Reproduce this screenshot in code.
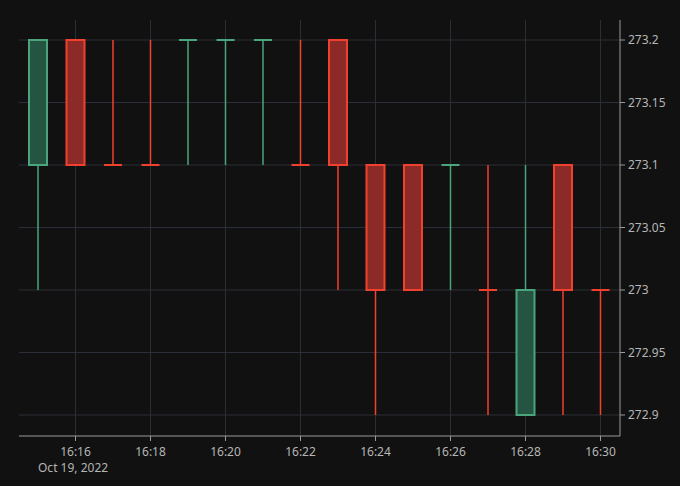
const G = { s: "#4aa57d", f: "#265442" };
const R = { s: "#f2402f", f: "#8c2a27" };
const Y = (p: number) => 40 + (273.2 - p) * 1250;
const X = (m: number) => 38 + (m - 15) * 37.5;
// [minute, open, high, low, close]
const data: [number, number, number, number, number][] = [
  [15, 273.1, 273.2, 273.0, 273.2],
  [16, 273.2, 273.2, 273.1, 273.1],
  [17, 273.1, 273.2, 273.1, 273.1],
  [18, 273.1, 273.2, 273.1, 273.1],
  [19, 273.2, 273.2, 273.1, 273.2],
  [20, 273.2, 273.2, 273.1, 273.2],
  [21, 273.2, 273.2, 273.1, 273.2],
  [22, 273.1, 273.2, 273.1, 273.1],
  [23, 273.2, 273.2, 273.0, 273.1],
  [24, 273.1, 273.1, 272.9, 273.0],
  [25, 273.1, 273.1, 273.0, 273.0],
  [26, 273.1, 273.1, 273.0, 273.1],
  [27, 273.0, 273.1, 272.9, 273.0],
  [28, 272.9, 273.1, 272.9, 273.0],
  [29, 273.1, 273.1, 272.9, 273.0],
  [30, 273.0, 273.0, 272.9, 273.0],
];
const greens = new Set([15, 19, 20, 21, 26, 28]);
const yt = ["273.2", "273.15", "273.1", "273.05", "273", "272.95", "272.9"];
export default function App() {
  return (
    <div className="w-[680px] h-[486px] bg-[#111111] font-['DejaVu_Sans',sans-serif]">
      <svg width="680" height="486">
        {[16, 18, 20, 22, 24, 26, 28, 30].map((m) => (
          <g key={m}>
            <line x1={X(m)} x2={X(m)} y1={20} y2={436} stroke="#2a2e36" />
            <line x1={X(m)} x2={X(m)} y1={436} y2={441} stroke="#9a9a9a" />
            <text x={X(m)} y={456} fill="#b5b5b5" fontSize="12" textAnchor="middle">16:{m}</text>
          </g>
        ))}
        {yt.map((t) => (
          <g key={t}>
            <line x1={19} x2={620} y1={Y(+t)} y2={Y(+t)} stroke="#2a2e36" />
            <line x1={620} x2={625} y1={Y(+t)} y2={Y(+t)} stroke="#9a9a9a" />
            <text x={628} y={Y(+t) + 4} fill="#b5b5b5" fontSize="12">{t}</text>
          </g>
        ))}
        <text x={38} y={472} fill="#b5b5b5" fontSize="12">Oct 19, 2022</text>
        {data.map(([m, o, h, l, c]) => {
          const col = greens.has(m) ? G : R;
          const x = X(m);
          const top = Y(Math.max(o, c));
          const bot = Y(Math.min(o, c));
          return (
            <g key={m}>
              <line x1={x} x2={x} y1={Y(h)} y2={Y(l)} stroke={col.s} strokeWidth="1.5" />
              {bot - top > 1 ? (
                <rect x={x - 9} y={top} width={18} height={bot - top} fill={col.f} stroke={col.s} strokeWidth="2" />
              ) : (
                <line x1={x - 9} x2={x + 9} y1={top} y2={top} stroke={col.s} strokeWidth="2" />
              )}
            </g>
          );
        })}
        <path d="M620 20 V436 H19" fill="none" stroke="#9a9a9a" />
      </svg>
    </div>
  );
}
